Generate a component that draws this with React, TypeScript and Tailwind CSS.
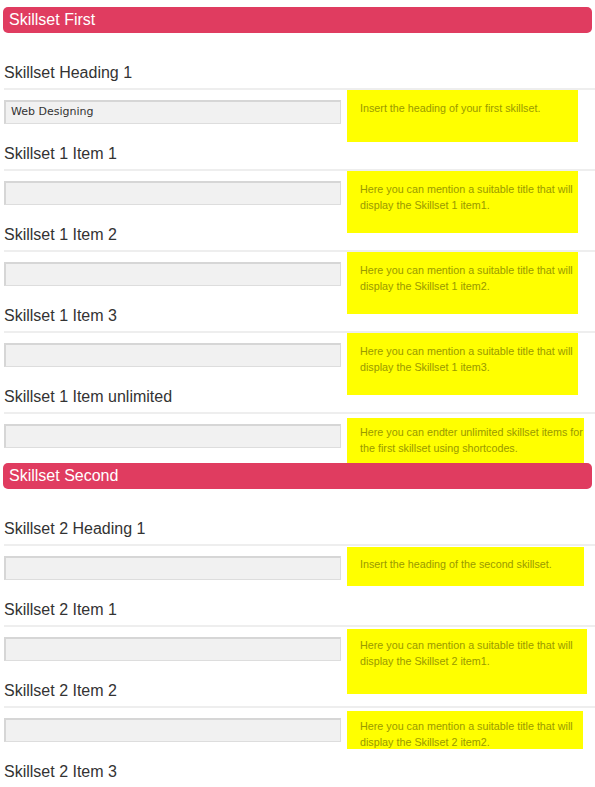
type Help = {
  lines: string[];
  w: string;
  h: string;
  mt: string;
  pt: string;
};

type FieldProps = {
  label: string;
  value?: string;
  help?: Help;
  height: string;
};

const SectionHeader = ({ title }: { title: string }) => {
  return (
    <div className="mx-[3px] h-[26px] w-[589px] rounded-[5px] bg-[#e03c60] pl-[6px] text-[16px] leading-[26px] text-white">
      {title}
    </div>
  );
};

const Field = ({ label, value, help, height }: FieldProps) => {
  return (
    <div className={height}>
      <div className="h-[26px] pl-[4px] pt-[1px] text-[16px] leading-[20px] text-[#333333]">
        {label}
      </div>
      {help && (
        <>
          <div className="ml-[4px] h-[2px] bg-[#eeeeee]" />
          <div className="flex items-start">
            <div className="ml-[4px] mt-[10px] h-[24px] w-[337px] shrink-0 border border-t-2 border-l-2 border-[#dddddd] border-t-[#d6d6d6] border-l-[#d6d6d6] bg-[#f1f1f1] pl-[5px] font-['DejaVu_Sans',sans-serif] text-[11px] leading-[20px] text-[#333333]">
              {value}
            </div>
            <div
              className={`ml-[6px] shrink-0 bg-[#ffff00] pl-[13px] text-[10.75px] leading-[16px] whitespace-nowrap text-[#9a9a00] ${help.w} ${help.h} ${help.mt} ${help.pt}`}
            >
              {help.lines.map((line, i) => (
                <div key={i}>{line}</div>
              ))}
            </div>
          </div>
        </>
      )}
    </div>
  );
};

const App = () => {
  return (
    <div className="h-[787px] w-[595px] overflow-hidden bg-white pt-[7px] font-['Liberation_Sans',Arial,sans-serif]">
      <SectionHeader title="Skillset First" />
      <div className="mt-[29px]">
        <Field
          label="Skillset Heading 1"
          value="Web Designing"
          height="h-[81px]"
          help={{
            lines: ["Insert the heading of your first skillset."],
            w: "w-[231px]",
            h: "h-[52px]",
            mt: "mt-0",
            pt: "pt-[10px]",
          }}
        />
        <Field
          label="Skillset 1 Item 1"
          height="h-[81px]"
          help={{
            lines: [
              "Here you can mention a suitable title that will",
              "display the Skillset 1 item1.",
            ],
            w: "w-[231px]",
            h: "h-[62px]",
            mt: "mt-0",
            pt: "pt-[10px]",
          }}
        />
        <Field
          label="Skillset 1 Item 2"
          height="h-[81px]"
          help={{
            lines: [
              "Here you can mention a suitable title that will",
              "display the Skillset 1 item2.",
            ],
            w: "w-[231px]",
            h: "h-[62px]",
            mt: "mt-0",
            pt: "pt-[10px]",
          }}
        />
        <Field
          label="Skillset 1 Item 3"
          height="h-[81px]"
          help={{
            lines: [
              "Here you can mention a suitable title that will",
              "display the Skillset 1 item3.",
            ],
            w: "w-[231px]",
            h: "h-[62px]",
            mt: "mt-0",
            pt: "pt-[10px]",
          }}
        />
        <Field
          label="Skillset 1 Item unlimited"
          height="h-[77px]"
          help={{
            lines: [
              "Here you can endter unlimited skillset items for",
              "the first skillset using shortcodes.",
            ],
            w: "w-[237px]",
            h: "h-[45px]",
            mt: "mt-[4px]",
            pt: "pt-[6px]",
          }}
        />
      </div>
      <SectionHeader title="Skillset Second" />
      <div className="mt-[29px]">
        <Field
          label="Skillset 2 Heading 1"
          height="h-[81px]"
          help={{
            lines: ["Insert the heading of the second skillset."],
            w: "w-[237px]",
            h: "h-[39px]",
            mt: "mt-[1px]",
            pt: "pt-[9px]",
          }}
        />
        <Field
          label="Skillset 2 Item 1"
          height="h-[81px]"
          help={{
            lines: [
              "Here you can mention a suitable title that will",
              "display the Skillset 2 item1.",
            ],
            w: "w-[240px]",
            h: "h-[65px]",
            mt: "mt-[2px]",
            pt: "pt-[8px]",
          }}
        />
        <Field
          label="Skillset 2 Item 2"
          height="h-[81px]"
          help={{
            lines: [
              "Here you can mention a suitable title that will",
              "display the Skillset 2 item2.",
            ],
            w: "w-[236px]",
            h: "h-[38px]",
            mt: "mt-[3px]",
            pt: "pt-[7px]",
          }}
        />
        <Field label="Skillset 2 Item 3" height="h-[26px]" />
      </div>
    </div>
  );
};

export default App;
